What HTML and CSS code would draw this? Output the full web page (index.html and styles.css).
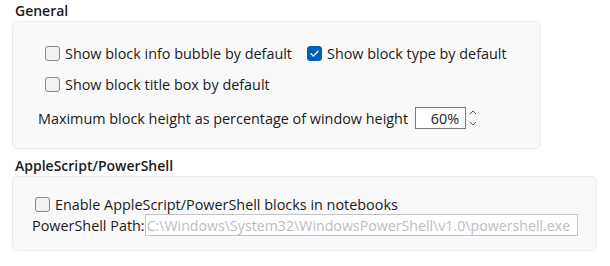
FILE: index.html
```html
<!DOCTYPE html>
<html lang="en">
<head>
  <meta charset="UTF-8" />
  <title>Preferences</title>
  <link rel="stylesheet" href="styles.css">
</head>
<body>

  <section class="group">
    <h2 class="group-title">General</h2>
    <div class="group-box general">
      <div class="check-grid">
        <label class="check"><span class="box"></span>Show block info bubble by default</label>
        <label class="check"><span class="box checked">
          <svg viewBox="0 0 15 15" width="15" height="15"><path d="M4 7.8 L6.4 10.1 L11 5.2" fill="none" stroke="#fff" stroke-width="1.3" stroke-linecap="round" stroke-linejoin="round"/></svg>
        </span>Show block type by default</label>
        <label class="check"><span class="box"></span>Show block title box by default</label>
      </div>
      <div class="height-row">
        <span>Maximum block height as percentage of window height</span>
        <input class="pct" type="text" value="60%" />
        <span class="spinner">
          <svg viewBox="0 0 8 18" width="8" height="18"><path d="M1 5 L4 2 L7 5 M1 13 L4 16 L7 13" fill="none" stroke="#555" stroke-width="1"/></svg>
        </span>
      </div>
    </div>
  </section>

  <section class="group">
    <h2 class="group-title">AppleScript/PowerShell</h2>
    <div class="group-box shell">
      <label class="check"><span class="box"></span>Enable AppleScript/PowerShell blocks in notebooks</label>
      <div class="path-row">
        <span>PowerShell Path:</span>
        <input class="path" type="text" value="C:\Windows\System32\WindowsPowerShell\v1.0\powershell.exe" disabled />
      </div>
    </div>
  </section>

</body>
</html>
```

FILE: styles.css
```css
body {
  margin: 0;
  padding: 0 12px;
  background-color: #fff;
  color: #1b1b1b;
  font-family: "Open Sans", "Noto Sans", sans-serif;
  font-size: 14.4px;
}

.group-title {
  margin: 0;
  padding: 2px 0 0 3px;
  height: 19px;
  font-size: 14px;
  font-weight: 600;
  line-height: 18px;
}

.group-box {
  background-color: #f9f9f9;
  border: 1px solid #ececec;
  border-radius: 5px;
  box-sizing: border-box;
}

.general {
  width: 529px;
  height: 128px;
  padding: 24px 0 0 32px;
}

.check-grid {
  display: grid;
  grid-template-columns: auto auto;
  justify-content: start;
  column-gap: 15px;
  row-gap: 16px;
}

.check {
  display: flex;
  align-items: center;
  gap: 5px;
  height: 15px;
  white-space: nowrap;
}

.box {
  width: 15px;
  height: 15px;
  box-sizing: border-box;
  border: 1px solid #8a8a8a;
  border-radius: 3px;
  background-color: #f1f1f1;
  flex-shrink: 0;
}

.box.checked {
  background-color: #005fb8;
  border-color: #005fb8;
}

.box svg {
  display: block;
  margin: -1px;
}

.height-row {
  display: flex;
  align-items: center;
  margin: 15px 0 0 -7px;
  height: 22px;
}

.pct {
  width: 51px;
  height: 22px;
  box-sizing: border-box;
  margin-left: 7px;
  border: 1px solid #7a7a7a;
  font: inherit;
  text-align: right;
  padding: 0 6px;
  color: #1b1b1b;
  background-color: #fff;
}

.spinner {
  margin-left: 3px;
  display: flex;
}

.group + .group {
  margin-top: 6px;
}

.shell {
  width: 585px;
  height: 75px;
  padding: 20px 0 0 22px;
}

.path-row {
  display: flex;
  align-items: center;
  margin: 2px 0 0 -3px;
  height: 22px;
}

.path {
  width: 433px;
  height: 22px;
  box-sizing: border-box;
  margin-left: 0;
  border: 1px solid #c4c4c4;
  background-color: #fff;
  color: #bdbdbd;
  font-family: inherit;
  font-size: 14.2px;
  padding: 0 1px;
}
```
